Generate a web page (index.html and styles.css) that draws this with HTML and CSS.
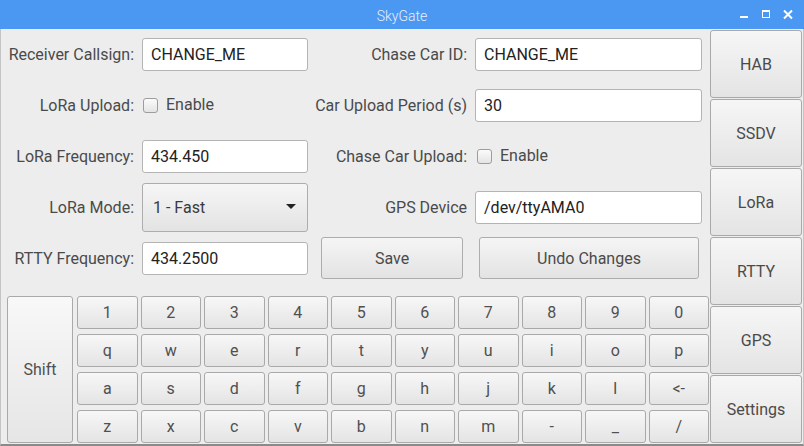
FILE: index.html
```html
<!DOCTYPE html>
<html>
<head>
<meta charset="utf-8">
<link rel="stylesheet" href="styles.css">
</head>
<body>
<div class="window">
  <div class="titlebar">
    <span class="title">SkyGate</span>
    <div class="controls">
      <svg class="ctl" width="12" height="12" viewBox="0 0 12 12"><rect x="2" y="7" width="8" height="2" fill="#fff"/></svg>
      <svg class="ctl" width="12" height="12" viewBox="0 0 12 12"><rect x="2.5" y="1.5" width="7" height="7" fill="none" stroke="#fff" stroke-width="1"/><rect x="2" y="1" width="8" height="2" fill="#fff"/></svg>
      <svg class="ctl" width="12" height="12" viewBox="0 0 12 12"><path d="M2 1.5 L10 9.5 M10 1.5 L2 9.5" stroke="#fff" stroke-width="2"/></svg>
    </div>
  </div>
  <div class="main">
    <div class="left">
      <div class="form">
        <div class="label">Receiver Callsign:</div>
        <div class="field"><div class="input">CHANGE_ME</div></div>
        <div class="label l2">Chase Car ID:</div>
        <div class="field"><div class="input wide">CHANGE_ME</div></div>

        <div class="label">LoRa Upload:</div>
        <div class="field"><span class="check"></span><span class="ctext">Enable</span></div>
        <div class="label l2">Car Upload Period (s)</div>
        <div class="field"><div class="input wide">30</div></div>

        <div class="label">LoRa Frequency:</div>
        <div class="field"><div class="input">434.450</div></div>
        <div class="label l2">Chase Car Upload:</div>
        <div class="field"><span class="check c2"></span><span class="ctext">Enable</span></div>

        <div class="label">LoRa Mode:</div>
        <div class="field"><div class="combo"><span>1 - Fast</span><span class="arrow"></span></div></div>
        <div class="label l2">GPS Device</div>
        <div class="field"><div class="input wide">/dev/ttyAMA0</div></div>

        <div class="label">RTTY Frequency:</div>
        <div class="field"><div class="input">434.2500</div></div>
        <div class="field"><div class="btn save">Save</div></div>
        <div class="field span"><div class="btn undo">Undo Changes</div></div>
      </div>
      <div class="keyboard">
        <div class="key shift">Shift</div>
        <div class="keys">
          <div class="key">1</div><div class="key">2</div><div class="key">3</div><div class="key">4</div><div class="key">5</div><div class="key">6</div><div class="key">7</div><div class="key">8</div><div class="key">9</div><div class="key">0</div>
          <div class="key">q</div><div class="key">w</div><div class="key">e</div><div class="key">r</div><div class="key">t</div><div class="key">y</div><div class="key">u</div><div class="key">i</div><div class="key">o</div><div class="key">p</div>
          <div class="key">a</div><div class="key">s</div><div class="key">d</div><div class="key">f</div><div class="key">g</div><div class="key">h</div><div class="key">j</div><div class="key">k</div><div class="key">l</div><div class="key">&lt;-</div>
          <div class="key">z</div><div class="key">x</div><div class="key">c</div><div class="key">v</div><div class="key">b</div><div class="key">n</div><div class="key">m</div><div class="key">-</div><div class="key">_</div><div class="key">/</div>
        </div>
      </div>
    </div>
    <div class="side">
      <div class="sbtn">HAB</div>
      <div class="sbtn">SSDV</div>
      <div class="sbtn">LoRa</div>
      <div class="sbtn">RTTY</div>
      <div class="sbtn">GPS</div>
      <div class="sbtn">Settings</div>
    </div>
  </div>
</div>
</body>
</html>
```

FILE: styles.css
```css
* { box-sizing: border-box; }
html, body { margin: 0; padding: 0; }
body {
  width: 804px;
  height: 446px;
  overflow: hidden;
  background: #ededed;
  font-family: Roboto, "Liberation Sans", sans-serif;
  color: #4a4a4a;
  font-size: 16px;
}
.window {
  width: 804px;
  height: 446px;
  display: flex;
  flex-direction: column;
  border-left: 1px solid #c4c4c4;
  border-right: 1px solid #c4c4c4;
  border-bottom: 2px solid #8a8a8a;
}
.titlebar {
  height: 29px;
  flex: none;
  background: #4a98f1;
  margin: 0 -1px;
  position: relative;
  display: flex;
  align-items: center;
  justify-content: center;
}
.title {
  color: #e6effc;
  font-size: 14px;
  font-weight: 300;
  margin-top: 2px;
}
.controls {
  position: absolute;
  right: 10px;
  top: 9px;
  display: flex;
  gap: 10px;
}
.ctl { display: block; }
.main {
  flex: 1;
  display: flex;
  min-height: 0;
}
.left {
  width: 709px;
  flex: none;
  display: flex;
  flex-direction: column;
}
.form {
  display: grid;
  grid-template-columns: 141px 179px 154px 227px;
  grid-template-rows: 51px 51px 51px 51px 50px;
}
.label {
  display: flex;
  align-items: center;
  justify-content: flex-end;
  padding-right: 8px;
  white-space: nowrap;
}
.field {
  display: flex;
  align-items: center;
}
.input {
  width: 166px;
  height: 33px;
  background: #fff;
  border: 1px solid #b4b4b4;
  border-radius: 3px;
  padding-left: 8px;
  display: flex;
  align-items: center;
  color: #222;
}
.input.wide { width: 227px; }
.check {
  width: 15px;
  height: 15px;
  border: 1px solid #9d9d9d;
  border-radius: 3px;
  background: linear-gradient(#fbfbfb, #e4e4e4);
  margin-left: 1px;
  margin-right: 8px;
}
.check.c2 { margin-left: 2px; }
.ctext { margin-top: -2px; }
.combo {
  width: 166px;
  height: 49px;
  border: 1px solid #adadad;
  border-radius: 3px;
  background: linear-gradient(#f6f6f6, #e3e3e3);
  display: flex;
  align-items: center;
  justify-content: space-between;
  padding: 0 11px 0 10px;
  color: #3a3a3a;
}
.arrow {
  width: 0;
  height: 0;
  border-left: 5px solid transparent;
  border-right: 5px solid transparent;
  border-top: 5px solid #222;
  margin-top: -2px;
}
.btn {
  height: 42px;
  border: 1px solid #adadad;
  border-radius: 3px;
  background: linear-gradient(#f5f5f5, #e3e3e3);
  display: flex;
  align-items: center;
  justify-content: center;
  color: #4a4a4a;
}
.save { width: 142px; }
.undo { width: 220px; margin-left: 4px; }
.keyboard {
  margin-top: 13px;
  margin-left: 6px;
  display: flex;
  gap: 4px;
}
.key {
  border: 1px solid #a9a9a9;
  border-radius: 3px;
  background: linear-gradient(#f7f7f7, #e4e4e4);
  display: flex;
  align-items: center;
  justify-content: center;
  color: #505050;
  height: 33px;
}
.shift {
  width: 66px;
  height: 147px;
  background: linear-gradient(#f8f8f8, #e6e6e6);
}
.keys {
  width: 632px;
  display: grid;
  grid-template-columns: repeat(10, 1fr);
  column-gap: 3px;
  row-gap: 5px;
}
.side {
  flex: 1;
  display: flex;
  flex-direction: column;
  gap: 1px;
  padding: 1px 1px 1px 0;
}
.sbtn {
  flex: 1;
  border: 1px solid #a9a9a9;
  border-radius: 3px;
  background: linear-gradient(#f6f6f6, #e4e4e4);
  display: flex;
  align-items: center;
  justify-content: center;
  color: #4a4a4a;
}
```
